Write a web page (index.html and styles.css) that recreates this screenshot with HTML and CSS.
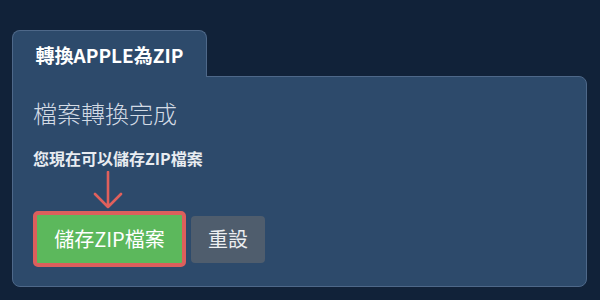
FILE: index.html
```html
<!DOCTYPE html>
<html lang="zh-Hant">
<head>
<meta charset="utf-8">
<link rel="stylesheet" href="styles.css">
</head>
<body>
<div class="wrap">
  <div class="tab">轉換APPLE為ZIP</div>
  <div class="panel">
    <h2 class="title">檔案轉換完成</h2>
    <p class="note">您現在可以儲存ZIP檔案</p>
    <svg class="arrow" width="30" height="38" viewBox="0 0 30 38">
      <path d="M15 1 V36 M2 23 L15 36 L28 23" fill="none" stroke="#e0605c" stroke-width="2.6" stroke-linecap="round" stroke-linejoin="round"/>
    </svg>
    <div class="actions">
      <button class="btn btn-save">儲存ZIP檔案</button>
      <button class="btn btn-reset">重設</button>
    </div>
  </div>
</div>
</body>
</html>
```
FILE: styles.css
```css
html, body {
  margin: 0;
  padding: 0;
  background: #112239;
  font-family: "Noto Sans CJK TC", "Noto Sans", sans-serif;
}
.wrap {
  padding: 30px 13px 0 12px;
}
.tab {
  display: inline-block;
  position: relative;
  z-index: 1;
  margin-bottom: -1px;
  width: 195px;
  box-sizing: border-box;
  text-align: center;
  padding: 11px 0 9px 0;
  line-height: 26px;
  font-size: 19px;
  font-weight: 700;
  color: #ffffff;
  background: #2d4a6b;
  border: 1px solid #4e6889;
  border-bottom: none;
  border-radius: 8px 8px 0 0;
}
.panel {
  background: #2d4a6b;
  border: 1px solid #4e6889;
  border-radius: 0 8px 8px 8px;
  padding: 20px 20px 19px 20px;
}
.title {
  margin: 0;
  font-size: 24px;
  line-height: 32px;
  font-weight: 300;
  color: #d3dbe5;
}
.note {
  margin: 18px 0 0 0;
  font-size: 16px;
  line-height: 22px;
  font-weight: 700;
  color: #e8ecf1;
}
.arrow {
  display: block;
  margin: 2px 0 0 60px;
}
.actions {
  display: flex;
  align-items: center;
  gap: 5px;
  margin-top: 2px;
}
.btn {
  box-sizing: border-box;
  font-family: inherit;
  font-size: 20px;
  line-height: 24px;
  border: none;
  white-space: nowrap;
  text-align: center;
  cursor: pointer;
}
.btn-save {
  background: #5cb85c;
  color: #ffffff;
  border: 4px solid #dc5f5c;
  border-radius: 5px;
  padding: 12px 0;
  width: 153px;
  height: 56px;
}
.btn-reset {
  background: #4f5d6d;
  color: #eceef1;
  border-radius: 4px;
  padding: 11px 0 12px;
  width: 74px;
  height: 47px;
}
```
